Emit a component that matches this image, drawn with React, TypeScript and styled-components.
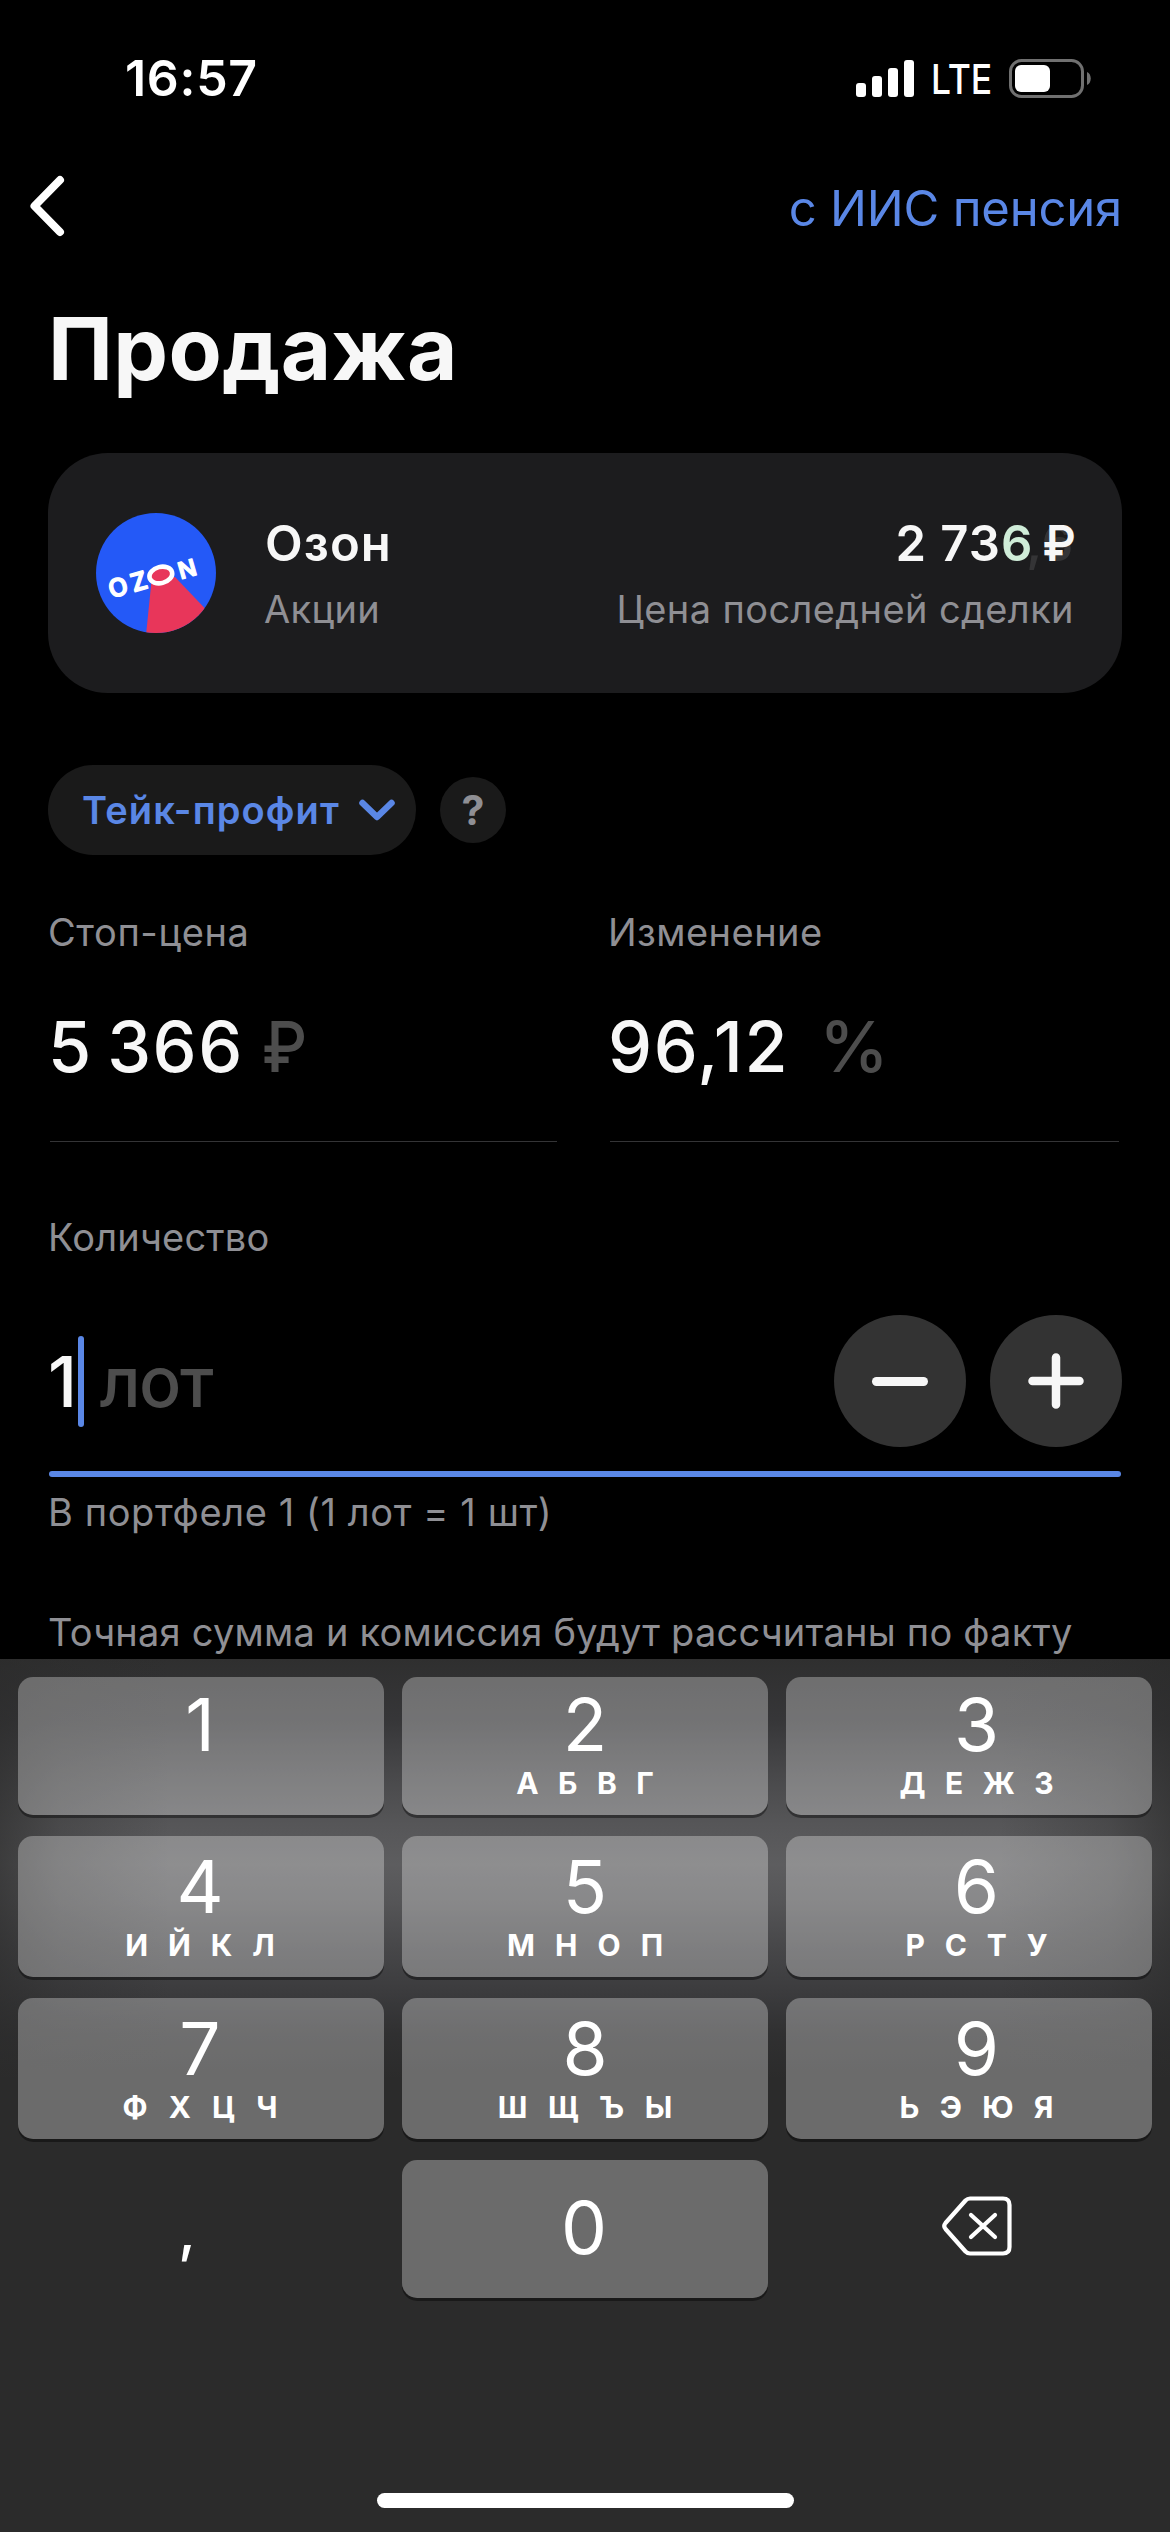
import React from 'react';
import styled, { createGlobalStyle } from 'styled-components';

const color = {
  blue: '#5a87e6',
  white: '#f7f7f7',
  muted: '#8f8f94',
  unit: '#4d4d4d',
  card: '#1c1c1e',
  chip: '#1a1a1a',
  round: '#333333',
};

const GlobalStyle = createGlobalStyle`
  * { box-sizing: border-box; }
  html, body { margin: 0; padding: 0; background: #000; }
  button { border: 0; padding: 0; margin: 0; background: none; font: inherit; color: inherit; }
  svg { display: block; flex: none; }
`;

const Screen = styled.div`
  width: 1170px;
  height: 2532px;
  display: flex;
  flex-direction: column;
  overflow: hidden;
  background: #000;
  color: ${color.white};
  font-family: Inter, "Liberation Sans", sans-serif;
  white-space: nowrap;
`;

/* Status bar */

const StatusBar = styled.header`
  height: 156px;
  padding: 0 79px 0 125px;
  display: flex;
  align-items: center;
  justify-content: space-between;
  color: #fff;
`;

const Clock = styled.span`
  font-size: 50px;
  font-weight: 600;
  letter-spacing: 0.7px;
`;

const StatusIcons = styled.div`
  display: flex;
  align-items: center;
`;

const NetworkType = styled.span`
  width: 61px;
  margin-left: 17px;
  margin-right: 17px;
  padding-top: 2px;
  font-size: 41px;
  font-weight: 500;
  transform: scaleX(0.865);
  transform-origin: left center;
`;

/* Navigation */

const NavBar = styled.nav`
  height: 104px;
  padding: 0 48px 0 26px;
  display: flex;
  align-items: center;
  justify-content: space-between;
`;

const BackButton = styled.button`
  width: 44px;
  height: 68px;
  margin-bottom: 4px;
`;

const AccountLink = styled.a`
  color: ${color.blue};
  font-size: 49px;
  letter-spacing: -0.2px;
`;

/* Scrollable content */

const Content = styled.main`
  flex: 1;
  min-height: 0;
  padding: 39px 48px 0;
  overflow: hidden;
`;

const Title = styled.h1`
  margin: 0;
  font-size: 87px;
  font-weight: 700;
  line-height: 100px;
  letter-spacing: 0.36px;
`;

const InstrumentCard = styled.section`
  height: 240px;
  margin-top: 54px;
  padding: 0 48px;
  display: flex;
  align-items: center;
  gap: 48px;
  border-radius: 60px;
  background: ${color.card};
`;

const CardColumn = styled.div<{ $end?: boolean }>`
  display: flex;
  flex-direction: column;
  gap: 11px;
  align-items: ${(p) => (p.$end ? 'flex-end' : 'flex-start')};
  margin-left: ${(p) => (p.$end ? 'auto' : '0')};
`;

const CardTitle = styled.div`
  padding-left: 1px;
  font-size: 49px;
  font-weight: 600;
  line-height: 62px;
  letter-spacing: 1.1px;
`;

const Price = styled.div`
  position: relative;
  height: 62px;
  display: flex;
  font-size: 49px;
  font-weight: 600;
  line-height: 62px;
  letter-spacing: 1px;
`;

const FreshDigit = styled.span`
  color: #cfecd8;
`;

const PriceCurrency = styled.span`
  margin: 0 -2px 0 7px;
  letter-spacing: 0;
  transform: scaleX(0.93);
  transform-origin: right center;
`;

/* Outgoing characters of the price while it rolls to its new value */
const FadingDigits = styled.span`
  position: absolute;
  right: 0;
  top: 0;
  color: rgba(255, 255, 255, 0.11);
  letter-spacing: 1px;
`;

const Caption = styled.div<{ $tracking?: number; $height?: number }>`
  color: ${color.muted};
  font-size: 38px;
  line-height: ${(p) => p.$height ?? 46}px;
  letter-spacing: ${(p) => p.$tracking ?? 0.4}px;
`;

const OrderTypeRow = styled.div`
  margin-top: 72px;
  display: flex;
  align-items: center;
  gap: 24px;
`;

const OrderTypeChip = styled.button`
  width: 368px;
  height: 90px;
  padding: 0 20px 0 34px;
  display: flex;
  align-items: center;
  justify-content: space-between;
  border-radius: 45px;
  background: ${color.chip};
  color: ${color.blue};
  font-size: 38px;
  font-weight: 600;
  letter-spacing: 1.1px;
`;

const HelpButton = styled.button`
  width: 66px;
  height: 66px;
  border-radius: 50%;
  background: ${color.chip};
  color: ${color.muted};
  font-size: 41px;
  font-weight: 700;
  line-height: 66px;
  text-align: center;
`;

const PriceFields = styled.div`
  margin-top: 54px;
  display: grid;
  grid-template-columns: 512px 1fr;
  column-gap: 48px;
`;

const Value = styled.div`
  display: flex;
  align-items: center;
  height: 84px;
  font-size: 70px;
  font-weight: 500;
  line-height: 84px;
  letter-spacing: 1.6px;
  word-spacing: -6px;
  white-space: pre;
`;

const FieldValue = styled(Value)`
  margin-top: 50px;
`;

const Unit = styled.span<{ $gap: number; $scale?: number; $tracking?: number }>`
  margin-left: ${(p) => p.$gap}px;
  color: ${color.unit};
  letter-spacing: ${(p) => p.$tracking ?? 0}px;
  transform: scaleX(${(p) => p.$scale ?? 1});
  transform-origin: left center;
`;

const Underline = styled.div`
  height: 1px;
  margin: 52px 3px 0 2px;
  background: #343436;
`;

const QuantityLabel = styled(Caption)`
  margin-top: 72px;
`;

const QuantityRow = styled.div`
  height: 132px;
  margin-top: 55px;
  display: flex;
  align-items: center;
  gap: 24px;
`;

const QuantityValue = styled(Value)`
  flex: 1;
  margin-top: 2px;
`;

const Caret = styled.span`
  width: 6px;
  height: 91px;
  margin: -2px 0 0 -1px;
  border-radius: 3px;
  background: ${color.blue};
`;

const StepButton = styled.button`
  width: 132px;
  height: 132px;
  display: flex;
  align-items: center;
  justify-content: center;
  border-radius: 50%;
  background: ${color.round};
`;

const ActiveUnderline = styled.div`
  height: 6px;
  margin: 24px 1px 0;
  border-radius: 3px;
  background: ${color.blue};
`;

const Helper = styled(Caption)`
  margin-top: 12px;
`;

const Note = styled(Caption)`
  margin-top: 74px;
`;

/* Keyboard */

const Keyboard = styled.section`
  height: 873px;
  padding: 18px 18px 24px;
  display: flex;
  flex-direction: column;
  justify-content: space-between;
  align-items: center;
  color: #fff;
  background:
    linear-gradient(90deg, rgba(43, 43, 43, 0.65) 0, rgba(43, 43, 43, 0.3) 60px, rgba(43, 43, 43, 0) 170px,
      rgba(43, 43, 43, 0) 1000px, rgba(43, 43, 43, 0.3) 1110px, rgba(43, 43, 43, 0.65) 1170px),
    linear-gradient(180deg, #2f2f2f 0, #363638 60px, #48484a 115px, #565658 165px, #5d5d5f 205px, #565658 240px,
      #48484a 285px, #3b3b3d 335px, #303031 375px, #2b2b2b 420px);
`;

const KeyGrid = styled.div`
  display: grid;
  grid-template-columns: repeat(3, 366px);
  grid-template-rows: 138px 141px 141px 138px;
  column-gap: 18px;
  row-gap: 21px;
`;

const shift = { left: '0 2px 16px 0', center: '0 0 16px 0', right: '0 0 16px 15px' };

const Key = styled.button<{ $align: keyof typeof shift }>`
  display: flex;
  flex-direction: column;
  align-items: center;
  justify-content: flex-end;
  gap: 6px;
  padding: ${(p) => shift[p.$align]};
  border-radius: 15px;
  background: rgba(255, 255, 255, 0.3);
  box-shadow: 0 3px 0 rgba(0, 0, 0, 0.4);
`;

const ZeroKey = styled(Key)`
  justify-content: center;
  padding: 0 2px 4px 0;
`;

const PlainKey = styled.button<{ $padding: string }>`
  display: flex;
  align-items: center;
  justify-content: center;
  padding: ${(p) => p.$padding};
`;

const Digit = styled.span`
  font-size: 73px;
  font-weight: 400;
  line-height: 75px;
`;

const Comma = styled.span`
  font-size: 58px;
  font-weight: 500;
  line-height: 75px;
`;

const Letters = styled.span<{ $tracking: number }>`
  height: 31px;
  font-size: 30px;
  font-weight: 700;
  line-height: 31px;
  letter-spacing: ${(p) => p.$tracking}px;
  margin-right: -${(p) => p.$tracking}px;
`;

const HomeIndicator = styled.div`
  width: 417px;
  height: 15px;
  border-radius: 8px;
  background: #fff;
`;

const SignalIcon = () => (
  <svg width="58" height="37" viewBox="0 0 58 37" fill="#fff">
    <rect x="0" y="23" width="10" height="14" rx="3" />
    <rect x="16" y="16" width="10" height="21" rx="3" />
    <rect x="32" y="8" width="10" height="29" rx="3" />
    <rect x="48" y="0" width="10" height="37" rx="3" />
  </svg>
);

const BatteryIcon = () => (
  <svg width="82" height="39" viewBox="0 0 82 39">
    <rect x="1.5" y="1.5" width="72" height="36" rx="11" fill="none" stroke="#707070" strokeWidth="3" />
    <rect x="6" y="6" width="35" height="27" rx="6" fill="#fff" />
    <path d="M78 13c5 2 5 11 0 13z" fill="#707070" />
  </svg>
);

const BackIcon = () => (
  <svg width="44" height="68" viewBox="0 0 44 68" fill="none" stroke="#fff" strokeWidth="8" strokeLinecap="round" strokeLinejoin="round">
    <path d="M34 8L8.5 34L34 60" />
  </svg>
);

const ChevronDown = () => (
  <svg width="38" height="24" viewBox="0 0 38 24" fill="none" stroke={color.blue} strokeWidth="6.5" strokeLinecap="round" strokeLinejoin="round">
    <path d="M4.500 5L19 19L33.500 5" />
  </svg>
);

const MinusIcon = () => (
  <svg width="58" height="58" viewBox="0 0 58 58" stroke="#f7f7f7" strokeWidth="9" strokeLinecap="round">
    <path d="M5.500 29.500H52.500" />
  </svg>
);

const PlusIcon = () => (
  <svg width="58" height="58" viewBox="0 0 58 58" stroke="#f7f7f7" strokeWidth="8.5" strokeLinecap="round">
    <path d="M5.500 29H52.500M29 5.500V52.500" />
  </svg>
);

const BackspaceIcon = () => (
  <svg width="70" height="60" viewBox="0 0 70 60" fill="none" stroke="#fff" strokeWidth="4.2" strokeLinecap="round" strokeLinejoin="round">
    <path d="M28 2.500H61Q67.500 2.500 67.500 9V51Q67.500 57.500 61 57.500H28Q25.500 57.500 23.500 55.500L3.500 33Q1 30 3.500 27L23.500 4.500Q25.500 2.500 28 2.500Z" />
    <path d="M29 19L53 41M53 19L29 41" />
  </svg>
);

const OzonLogo = () => (
  <svg width="120" height="120" viewBox="0 0 120 120">
    <defs>
      <clipPath id="ozon-disc">
        <circle cx="60" cy="60" r="60" />
      </clipPath>
    </defs>
    <g clipPath="url(#ozon-disc)">
      <rect width="120" height="120" fill="#2459f7" />
      <path d="M55.500 68L50 122H130L120 107L79 64Z" fill="#e8365a" />
    </g>
    <g
      fill="#fff"
      stroke="#fff"
      strokeWidth="1.2"
      strokeLinejoin="round"
      fontFamily="Inter, sans-serif"
      fontWeight="600"
      fontSize="25"
      textAnchor="middle"
    >
      <text transform="translate(22 74) rotate(-16)" y="9.1">O</text>
      <text transform="translate(42.800 68.300) rotate(-16)" y="9.1">Z</text>
      <text transform="translate(91 55.800) rotate(-16) scale(0.95 0.93)" y="9.1">N</text>
    </g>
    <ellipse cx="64.8" cy="62" rx="11.6" ry="8.1" transform="rotate(-14 64.8 62)" fill="#e8365a" stroke="#fff" strokeWidth="4.6" />
  </svg>
);

type Align = keyof typeof shift;

const keys: { digit: string; letters: string; tracking: number }[] = [
  { digit: '1', letters: '', tracking: 0 },
  { digit: '2', letters: 'А Б В Г', tracking: 6.2 },
  { digit: '3', letters: 'Д Е Ж З', tracking: 6.2 },
  { digit: '4', letters: 'И Й К Л', tracking: 6.4 },
  { digit: '5', letters: 'М Н О П', tracking: 6.5 },
  { digit: '6', letters: 'Р С Т У', tracking: 6.4 },
  { digit: '7', letters: 'Ф Х Ц Ч', tracking: 7 },
  { digit: '8', letters: 'Ш Щ Ъ Ы', tracking: 6.8 },
  { digit: '9', letters: 'Ь Э Ю Я', tracking: 6.6 },
];

const columns: Align[] = ['left', 'center', 'right'];

export default function App() {
  return (
    <>
      <GlobalStyle />
      <Screen>
        <StatusBar>
          <Clock>16:57</Clock>
          <StatusIcons>
            <SignalIcon />
            <NetworkType>LTE</NetworkType>
            <BatteryIcon />
          </StatusIcons>
        </StatusBar>

        <NavBar>
          <BackButton aria-label="Назад">
            <BackIcon />
          </BackButton>
          <AccountLink>с ИИС пенсия</AccountLink>
        </NavBar>

        <Content>
          <Title>Продажа</Title>

          <InstrumentCard>
            <OzonLogo />
            <CardColumn>
              <CardTitle>Озон</CardTitle>
              <Caption $tracking={0.3} $height={47}>Акции</Caption>
            </CardColumn>
            <CardColumn $end>
              <Price>
                <FadingDigits aria-hidden>,6</FadingDigits>
                <span>2 73</span>
                <FreshDigit>6</FreshDigit>
                <PriceCurrency>₽</PriceCurrency>
              </Price>
              <Caption $tracking={0.4} $height={47}>Цена последней сделки</Caption>
            </CardColumn>
          </InstrumentCard>

          <OrderTypeRow>
            <OrderTypeChip>
              Тейк-профит
              <ChevronDown />
            </OrderTypeChip>
            <HelpButton>?</HelpButton>
          </OrderTypeRow>

          <PriceFields>
            <div>
              <Caption $tracking={0.6}>Стоп-цена</Caption>
              <FieldValue>
                5 366<Unit $gap={18} $scale={0.9}>₽</Unit>
              </FieldValue>
              <Underline />
            </div>
            <div>
              <Caption $tracking={0.45}>Изменение</Caption>
              <FieldValue>
                96,12<Unit $gap={30}>%</Unit>
              </FieldValue>
              <Underline />
            </div>
          </PriceFields>

          <QuantityLabel $tracking={0.2}>Количество</QuantityLabel>
          <QuantityRow>
            <QuantityValue>
              1<Caret />
              <Unit $gap={16} $tracking={-1.5}>лот</Unit>
            </QuantityValue>
            <StepButton aria-label="Уменьшить">
              <MinusIcon />
            </StepButton>
            <StepButton aria-label="Увеличить">
              <PlusIcon />
            </StepButton>
          </QuantityRow>
          <ActiveUnderline />
          <Helper $tracking={0.6}>В портфеле 1 (1 лот = 1 шт)</Helper>
          <Note $tracking={0.22}>Точная сумма и комиссия будут рассчитаны по факту</Note>
        </Content>

        <Keyboard>
          <KeyGrid>
            {keys.map((key, i) => (
              <Key key={key.digit} $align={columns[i % 3]}>
                <Digit>{key.digit}</Digit>
                <Letters $tracking={key.tracking}>{key.letters}</Letters>
              </Key>
            ))}
            <PlainKey $padding="2px 28px 0 0">
              <Comma>,</Comma>
            </PlainKey>
            <ZeroKey $align="center">
              <Digit>0</Digit>
            </ZeroKey>
            <PlainKey $padding="0 0 6px 16px" aria-label="Удалить">
              <BackspaceIcon />
            </PlainKey>
          </KeyGrid>
          <HomeIndicator />
        </Keyboard>
      </Screen>
    </>
  );
}
